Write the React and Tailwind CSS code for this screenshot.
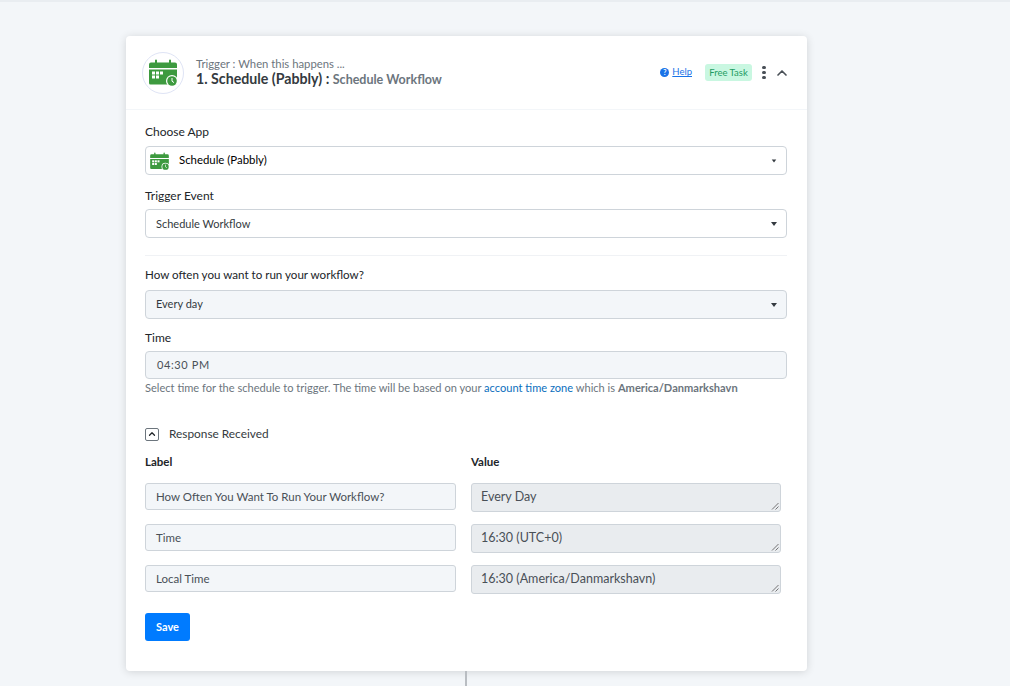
import { ChevronUp } from 'lucide-react'

const font = "font-['Lato','Open_Sans',sans-serif]"

function CalendarIcon({ className }) {
  return (
    <svg viewBox="0 0 28 27" className={className}>
      <path fill="#3d9a3f" d="M2 3.5h4V1.6a1 1 0 0 1 2 0v1.9h12V1.6a1 1 0 0 1 2 0v1.9h4a2 2 0 0 1 2 2V9H0V5.5a2 2 0 0 1 2-2z" />
      <path fill="#3d9a3f" d="M0 10.5h28V24a1.5 1.5 0 0 1-1.5 1.5h-25A1.5 1.5 0 0 1 0 24z" />
      <rect x="3" y="12.5" width="3" height="3" fill="#fff" />
      <rect x="7" y="12.5" width="3" height="3" fill="#fff" />
      <rect x="11" y="12.5" width="3" height="3" fill="#fff" />
      <rect x="3" y="16.5" width="3" height="3" fill="#fff" />
      <rect x="7" y="16.5" width="3" height="3" fill="#fff" />
      <circle cx="23" cy="22" r="6" fill="#fff" />
      <circle cx="23" cy="22" r="4.8" fill="#3d9a3f" />
      <path d="M23 19v3.2l2 1.4" fill="none" stroke="#fff" strokeWidth="1" />
    </svg>
  )
}

function Caret() {
  return <span className="w-0 h-0 border-x-[3.5px] border-x-transparent border-t-[4px] border-t-[#343a40]" />
}

function Field({ label, labelClass, children }) {
  return (
    <div>
      <div className={`leading-[18px] text-[#212529] ${labelClass}`}>{label}</div>
      {children}
    </div>
  )
}

function SelectBox({ children, muted, caretClass = '' }) {
  return (
    <div className={`h-[29px] flex items-center justify-between pl-[10px] pr-[9px] border border-[#ced4da] rounded-[4px] text-[11px] text-[#343a40] ${muted ? 'bg-[#f3f6f9]' : 'bg-white'}`}>
      <div className="flex items-center">{children}</div>
      <span className={`flex ${caretClass}`}><Caret /></span>
    </div>
  )
}

const rows = [
  { label: 'How Often You Want To Run Your Workflow?', value: 'Every Day' },
  { label: 'Time', value: '16:30 (UTC+0)' },
  { label: 'Local Time', value: '16:30 (America/Danmarkshavn)' },
]

export default function App() {
  return (
    <div className={`relative h-[686px] overflow-hidden bg-[#f3f6f9] border-t-2 border-[#e9edf1] ${font}`}>
      <div className="w-[681px] ml-[126px] mt-[34px] bg-white rounded-[4px] shadow-[0_1px_8px_rgba(0,0,0,0.14)]">
        <div className="h-[74px] flex items-center pl-[16px] pr-[17px] border-b border-[#f3f6f9]">
          <div className="w-[42px] h-[42px] rounded-full border border-[#dfe4f5] flex items-center justify-center">
            <CalendarIcon className="w-[28px] h-[27px]" />
          </div>
          <div className="ml-[12px] flex-1">
            <div className="text-[11.3px] leading-[13px] text-[#6c757d]">Trigger : When this happens ...</div>
            <div className="text-[14.2px] leading-[18px] font-bold text-[#343a40]">
              1. Schedule (Pabbly) : <span className="text-[12.5px] text-[#6c757d]">Schedule Workflow</span>
            </div>
          </div>
          <div className="flex items-center">
            <span className="w-[9px] h-[9px] rounded-full bg-[#1a73e8] text-white text-[7px] leading-[9px] font-bold text-center">?</span>
            <span className="ml-[3px] text-[9.5px] text-[#1a73e8] underline">Help</span>
            <span className="ml-[13px] h-[17px] w-[47px] rounded-[3px] bg-[#c9f7e1] text-[#1f9d63] text-[9.5px] leading-[17px] text-center">Free Task</span>
            <span className="ml-[10px] flex flex-col gap-[2px]">
              <span className="w-[4px] h-[3px] rounded-full bg-[#495057]" />
              <span className="w-[4px] h-[3px] rounded-full bg-[#495057]" />
              <span className="w-[4px] h-[3px] rounded-full bg-[#495057]" />
            </span>
            <ChevronUp className="ml-[8px] w-[16px] h-[16px] text-[#495057]" strokeWidth={2.5} />
          </div>
        </div>

        <div className="pl-[19px] pr-[20px] pt-[13px] pb-[30px]">
          <Field label="Choose App" labelClass="mb-[5px] text-[12px]">
            <SelectBox caretClass="scale-75">
              <CalendarIcon className="w-[19px] h-[18px] -ml-[6px] mr-[10px]" />
              <span className="-mt-px text-[11.4px] text-black">Schedule (Pabbly)</span>
            </SelectBox>
          </Field>
          <Field label="Trigger Event" labelClass="mt-[12px] mb-[4px] text-[12px]">
            <SelectBox><span className="pt-px">Schedule Workflow</span></SelectBox>
          </Field>
          <div className="h-px bg-[#f0f2f5] mt-[17px]" />
          <Field label="How often you want to run your workflow?" labelClass="mt-[10px] mb-[6px] text-[11.6px]">
            <SelectBox muted>Every day</SelectBox>
          </Field>
          <Field label="Time" labelClass="mt-[10px] mb-[4px] text-[12px]">
            <div className="h-[28px] px-[11px] flex items-center pt-px bg-[#f3f6f9] border border-[#ced4da] rounded-[4px] text-[11px] tracking-[0.6px] text-[#495057]">04:30 PM</div>
          </Field>
          <p className="mt-[1px] text-[11.08px] leading-[16px] text-[#6c757d]">
            Select time for the schedule to trigger. The time will be based on your{' '}
            <span className="text-[#0a6ebd]">account time zone</span> which is{' '}
            <span className="font-bold">America/Danmarkshavn</span>
          </p>

          <div className="mt-[29px] flex items-center h-[18px]">
            <span className="w-[14px] h-[13px] flex items-center justify-center border border-[#6c757d] rounded-[2px]">
              <ChevronUp className="w-[10px] h-[10px] text-[#212529]" strokeWidth={3} />
            </span>
            <span className="ml-[10px] text-[11.85px] text-[#343a40]">Response Received</span>
          </div>

          <div className="mt-[10px] grid grid-cols-[311px_310px] gap-x-[15px] text-[11.5px] font-bold leading-[18px] text-[#212529]">
            <div>Label</div>
            <div>Value</div>
          </div>

          <div className="mt-[12px] flex flex-col gap-[12px]">
            {rows.map((row) => (
              <div key={row.label} className="grid grid-cols-[311px_310px] gap-x-[15px] items-start">
                <div className="h-[27px] px-[10px] flex items-center pt-px bg-[#f3f6f9] border border-[#ced4da] rounded-[3px] text-[11.5px] text-[#495057]">
                  {row.label}
                </div>
                <div className="relative h-[29px] px-[9px] flex items-center bg-[#e9ecef] border border-[#ced4da] rounded-[3px] text-[12.5px] text-[#495057]">
                  <span className="-mt-px">{row.value}</span>
                  <svg viewBox="0 0 8 8" className="absolute right-[1px] bottom-[1px] w-[8px] h-[8px]">
                    <path d="M1 7.5 7.5 1M4.5 7.5 7.5 4.5" stroke="#555" strokeWidth="0.8" />
                  </svg>
                </div>
              </div>
            ))}
          </div>

          <button className="mt-[19px] w-[45px] h-[28px] rounded-[3px] bg-[#007bff] text-white text-[11px] font-bold">Save</button>
        </div>
      </div>
      <div className="w-[2px] h-[15px] ml-[465px] bg-[#b9bdc2]" />
    </div>
  )
}
